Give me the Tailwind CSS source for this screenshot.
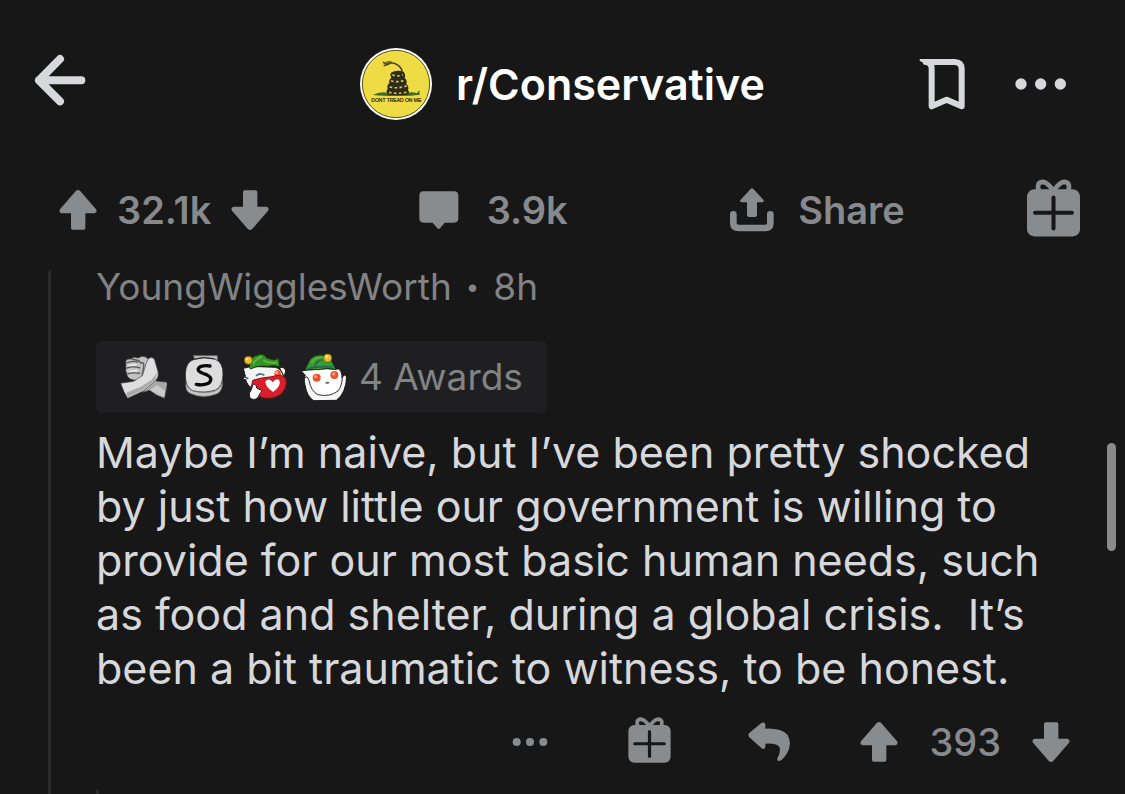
<!DOCTYPE html>
<html lang="en">
<head>
<meta charset="utf-8">
<meta name="viewport" content="width=device-width, initial-scale=1">
<title>r/Conservative</title>
<script src="https://cdn.jsdelivr.net/npm/@tailwindcss/browser@4"></script>
</head>
<body class="bg-[#171717] font-['Inter',sans-serif] text-[#d7d8db]">
<svg class="hidden" aria-hidden="true">
  <symbol id="up" viewBox="0 0 114 120"><path d="M51 2Q57-2 63 2L111 58Q116 66 107 70L79 70L79 114Q79 119 74 119L41 119Q36 119 36 114L36 70L7 70Q-2 66 3 58Z"/></symbol>
  <symbol id="down" viewBox="0 0 114 120"><path d="M51 118Q57 122 63 118L111 62Q116 54 107 50L79 50L79 6Q79 1 74 1L41 1Q36 1 36 6L36 50L7 50Q-2 54 3 62Z"/></symbol>
  <symbol id="gift" viewBox="950 28 158 172">
    <rect x="950" y="58" width="158" height="141" rx="22"/>
    <path d="M1028 62C1016 44 1004 36 996 36C981 37 980 52 986 62M1030 62C1042 44 1054 36 1062 36C1077 37 1078 52 1072 62" fill="none" stroke="currentColor" stroke-width="14"/>
    <path d="M1029 83V175M974 128H1084" fill="none" stroke="#171717" stroke-width="12" stroke-linecap="round"/>
  </symbol>
</svg>
<div class="relative flex min-h-screen flex-col overflow-hidden">
  <header class="grid grid-cols-[1fr_auto_1fr] items-center px-[34px] pt-7">
    <button aria-label="Back" class="-mt-2 w-[52px]">
      <svg class="h-[52px] w-[52px]" viewBox="42 41 156 156" fill="none" stroke="#d7d8db" stroke-width="24" stroke-linecap="round" stroke-linejoin="round"><path d="M120 56L57 120L120 183M57 120H184"/></svg>
    </button>
    <a href="#" class="flex h-28 items-center gap-6 text-[43px] font-semibold text-white">
      <svg class="h-[72px] w-[72px]" viewBox="53 54 216 216" aria-hidden="true">
        <circle cx="161" cy="162" r="108" fill="#fff"/>
        <circle cx="161" cy="162" r="101" fill="#efdc45" stroke="#57501f" stroke-width="3"/>
        <path d="M92 195Q112 184 133 188L198 188Q210 184 224 190L231 180L232 194Q200 199 162 198Q120 198 92 195Z" fill="#3d6b25"/>
        <path d="M122 97L136 103L124 107M136 103Q150 95 162 103Q174 108 180 124" fill="none" stroke="#4d4522" stroke-width="5"/>
        <path d="M132 96H148" stroke="#4d4522" stroke-width="4"/>
        <path d="M146 128Q161 119 184 125Q191 133 187 144Q196 152 192 162Q201 170 197 180Q206 192 190 195H142Q127 189 136 176Q133 166 141 160Q138 149 147 144Q141 136 146 128Z" fill="#2c2b1b"/>
        <path d="M150 134Q162 141 182 134M146 152Q166 159 188 150M142 170Q165 178 193 167M140 187Q165 193 196 186" fill="none" stroke="#d5c440" stroke-width="5" stroke-dasharray="8 7"/>
        <text x="162" y="217" text-anchor="middle" font-family="Liberation Sans, sans-serif" font-size="15" font-weight="400" fill="#2b2713" stroke="#2b2713" stroke-width="0.6">DONT TREAD ON ME</text>
      </svg>
      <span>r/Conservative</span>
    </a>
    <div class="mr-6 flex items-center justify-end gap-12">
      <button aria-label="Save"><svg class="h-[52px] w-12" viewBox="52 57 144 156" fill="none" stroke="#d7d8db" stroke-linejoin="round" stroke-linecap="round"><path d="M90 202V90Q90 69 72 69H158Q180 69 180 90V202L135 182Z" stroke-width="18"/><path d="M54 60H80V84Q75 71 58 68Q52 65 54 60Z" fill="#d7d8db" stroke="none"/></svg></button>
      <button aria-label="More options"><svg class="h-3 w-[52px]" viewBox="346 114 156 36" fill="#d7d8db"><circle cx="364" cy="132" r="17"/><circle cx="423" cy="132" r="17"/><circle cx="482" cy="132" r="17"/></svg></button>
    </div>
  </header>

  <div class="mt-[39px] grid h-[62px] grid-cols-[360fr_312fr_297fr_auto] items-center pr-[45px] pl-[59px] text-[38px] font-semibold text-[#87898c]">
    <div class="flex items-center gap-5">
      <button aria-label="Upvote"><svg class="h-10 w-[38px] fill-[#898c8f]"><use href="#up"/></svg></button>
      <span>32.1k</span>
      <button aria-label="Downvote"><svg class="h-10 w-[38px] fill-[#898c8f]"><use href="#down"/></svg></button>
    </div>
    <button class="flex items-center gap-7">
      <svg class="h-[38px] w-10 fill-[#898c8f]" viewBox="55 61 120 114" aria-hidden="true"><path d="M69 62H160Q173 62 173 75V143Q173 156 160 156H132L118 173Q114 177 110 173L96 156H69Q56 156 56 143V75Q56 62 69 62Z"/></svg>
      <span>3.9k</span>
    </button>
    <button class="flex items-center gap-6">
      <svg class="h-11 w-11 fill-[#898c8f]" viewBox="60 55 132 132" aria-hidden="true"><path d="M122 58Q126 54 130 58L160 90Q164 96 157 98H141V136Q141 142 135 142H117Q111 142 111 136V98H95Q87 96 92 90Z"/><path d="M70 134V160Q70 175 86 175H166Q181 175 181 160V134" fill="none" stroke="#898c8f" stroke-width="20" stroke-linecap="round"/></svg>
      <span>Share</span>
    </button>
    <button aria-label="Give award"><svg class="mb-1 h-[58px] w-[53px] fill-[#898c8f] text-[#898c8f]"><use href="#gift"/></svg></button>
  </div>

  <main class="mt-[29px] ml-12 flex grow flex-col rounded-t-sm border-l-3 border-[#2b2b2c] pr-[55px] pl-[45px]">
    <p class="flex h-[34px] items-center text-[37px] text-[#818385]"><a href="#">YoungWigglesWorth</a><span class="mx-[14px] text-2xl">•</span><span>8h</span></p>
    <button class="mt-[37px] flex h-[72px] items-center gap-3 self-start rounded-md bg-[#1f1f21] pr-6 pl-[23px] text-[37px] text-[#818385]">
      <svg class="h-12 w-12" viewBox="87 69 144 144" aria-hidden="true" stroke-linejoin="round">
        <path d="M158 187L185 149L204 154L233 157L223 205L198 194L180 180Z" fill="#a7a7a7" stroke="#555" stroke-width="2"/>
        <path d="M179 181L207 196L223 201L226 184L202 164Z" fill="#c9c9c9"/>
        <path d="M107 93Q111 84 121 87Q132 77 145 83Q157 74 170 82L181 94L176 150L140 151Q118 151 112 139L107 123Z" fill="#c2c2c2" stroke="#333" stroke-width="3"/>
        <path d="M109 99Q125 91 145 96M109 115Q128 107 151 114M112 132Q128 126 151 130M125 87L145 91L155 101M151 99Q164 94 161 111L155 145" fill="none" stroke="#575757" stroke-width="4"/>
        <path d="M116 106L139 104M118 123L143 122" stroke="#ececec" stroke-width="5"/>
        <path d="M175 86Q187 78 194 90L204 125Q208 140 197 151L160 183L113 205Q101 187 92 160L131 154L157 137L165 112Q167 99 175 86Z" fill="#dedede" stroke="#444" stroke-width="2"/>
        <path d="M113 202L160 179L196 148L202 127L184 150L151 171L109 188Z" fill="#aaa"/>
      </svg>
      <svg class="h-12 w-12" viewBox="267 69 144 144" aria-hidden="true">
        <path d="M288 155Q284 185 303 191Q341 207 379 192Q394 187 397 165L397 143Z" fill="#c5c5c5" stroke="#777" stroke-width="2"/>
        <path d="M310 77H382V92H317Z" fill="#bdbdbd" stroke="#777" stroke-width="2"/>
        <path d="M313 88Q341 78 374 87Q400 96 399 133Q398 169 377 180Q343 191 307 182Q285 170 286 132Q287 95 313 88Z" fill="#dddddd" stroke="#161616" stroke-width="2"/>
        <path d="M313 88Q341 79 374 87" fill="none" stroke="#222" stroke-width="3"/>
        <path d="M290 167Q302 186 340 188Q382 189 395 166" fill="none" stroke="#777" stroke-width="2"/>
        <path d="M360 108Q346 105 334 109Q322 114 325 121Q329 127 347 133Q360 139 362 145Q364 153 355 160Q340 167 319 163" fill="none" stroke="#080808" stroke-width="10" stroke-linecap="round"/>
      </svg>
      <svg class="h-12 w-12" viewBox="447 69 144 144" aria-hidden="true" stroke-linejoin="round">
        <path d="M570 113Q584 110 587 123L583 139" fill="#fff" stroke="#222" stroke-width="3"/>
        <path d="M460 115L484 109L557 112Q577 119 580 139L570 172L489 176Q470 166 467 148L456 150L466 139Z" fill="#f3f5f4" stroke="#171717" stroke-width="3"/>
        <ellipse cx="563" cy="132" rx="10" ry="12" fill="#eb502b"/><circle cx="560" cy="128" r="5" fill="#ffb18d"/>
        <path d="M498 138Q510 126 523 136M464 140L475 146" fill="none" stroke="#4c6e7c" stroke-width="5"/>
        <path d="M478 112Q478 87 493 79L512 72Q521 72 531 84L552 90L566 85L568 106L573 111Q552 104 532 109Q502 106 482 117Z" fill="#32952b" stroke="#143b13" stroke-width="3"/>
        <path d="M489 103Q498 85 516 80M520 91Q537 102 562 97" fill="none" stroke="#67bb35" stroke-width="5"/>
        <circle cx="475" cy="91" r="12" fill="#edba2c" stroke="#7b5512" stroke-width="2"/><circle cx="471" cy="87" r="4" fill="#ffe68d"/>
        <path d="M488 151Q510 143 546 140Q573 131 585 143Q593 155 584 177Q574 198 547 203Q517 208 504 195L484 172Z" fill="#d91f2c" stroke="#88131d" stroke-width="3"/>
        <path d="M549 186Q522 167 527 153Q538 142 548 157Q559 142 568 151Q575 167 549 186Z" fill="#fff"/>
        <path d="M489 163Q499 161 500 174L514 181Q517 187 510 190L504 203Q489 214 479 202Q475 188 484 179Z" fill="#fff" stroke="#222" stroke-width="3"/>
      </svg>
      <svg class="h-12 w-12" viewBox="627 69 144 144" aria-hidden="true" stroke-linejoin="round">
        <path d="M634 123L650 120L746 117Q757 124 756 145L762 134L770 140Q768 190 739 211L671 212Q651 200 645 165Q640 144 646 136Z" fill="#f6f6f6" stroke="#191919" stroke-width="3"/>
        <path d="M662 128Q668 118 709 118Q750 118 752 145Q755 173 737 189Q713 201 681 191Q662 175 662 154Z" fill="#fff"/>
        <path d="M645 144Q651 134 657 151Q663 184 684 194Q719 202 744 183Q754 172 757 146" fill="none" stroke="#333" stroke-width="3"/>
        <circle cx="680" cy="143" r="12" fill="#e95331"/><circle cx="733" cy="135" r="12" fill="#e95331"/><circle cx="677" cy="140" r="5" fill="#ff9878"/><circle cx="731" cy="132" r="5" fill="#ff9878"/>
        <path d="M706 157Q714 153 719 158Q713 163 707 161" fill="#666"/>
        <path d="M644 121L661 87Q678 71 702 76L723 89L738 119Q714 110 686 119Q662 115 644 121Z" fill="#389c31" stroke="#143b13" stroke-width="3"/>
        <path d="M675 112Q676 93 697 88M652 117Q679 107 728 111" fill="none" stroke="#246b55" stroke-width="5"/><path d="M664 99Q675 82 697 82" fill="none" stroke="#65b438" stroke-width="5"/>
        <circle cx="713" cy="84" r="12" fill="#efc032" stroke="#8b6418" stroke-width="2"/><circle cx="710" cy="80" r="4" fill="#ffe690"/>
      </svg>
      <span>4 Awards</span>
    </button>
    <p class="mt-3 text-[43px] leading-[54px] whitespace-nowrap text-[#d7d8db]">Maybe I’m naive, but I’ve been pretty shocked<br>by just how little our government is willing to<br>provide for our most basic human needs, such<br>as food and shelter, during a global crisis.&nbsp; It’s<br>been a bit traumatic to witness, to be honest.</p>
    <div class="mt-[22px] flex h-[50px] items-center justify-end text-[38px] font-medium text-[#87898c]">
      <button aria-label="Comment options"><svg class="h-3 w-9 fill-[#898c8f]" viewBox="69 108 108 36"><circle cx="83" cy="126" r="12"/><circle cx="123" cy="126" r="12"/><circle cx="163" cy="126" r="12"/></svg></button>
      <button aria-label="Give award" class="ml-20"><svg class="mb-1 h-[46px] w-[43px] fill-[#898c8f] text-[#898c8f]"><use href="#gift"/></svg></button>
      <button aria-label="Reply" class="ml-[77px]"><svg class="h-10 w-[43px] fill-[#898c8f]" viewBox="780 67 129 120"><path d="M783 101L819 71Q829 65 832 74V87Q879 85 899 106Q914 134 896 162Q887 178 874 184Q865 184 869 174Q878 157 875 144Q869 130 832 132V142Q829 153 820 145L784 113Q779 107 783 101Z"/></svg></button>
      <button aria-label="Upvote comment" class="ml-[69px]"><svg class="h-10 w-[38px] fill-[#898c8f]"><use href="#up"/></svg></button>
      <span class="mx-[31px]">393</span>
      <button aria-label="Downvote comment"><svg class="h-10 w-[38px] fill-[#898c8f]"><use href="#down"/></svg></button>
    </div>
    <div class="mt-auto h-1 w-[3px] bg-[#2b2b2c]"></div>
  </main>
  <div class="absolute top-[443px] right-[9px] h-[108px] w-[9px] rounded-full bg-[#8a8a8a]"></div>
</div>
</body>
</html>
